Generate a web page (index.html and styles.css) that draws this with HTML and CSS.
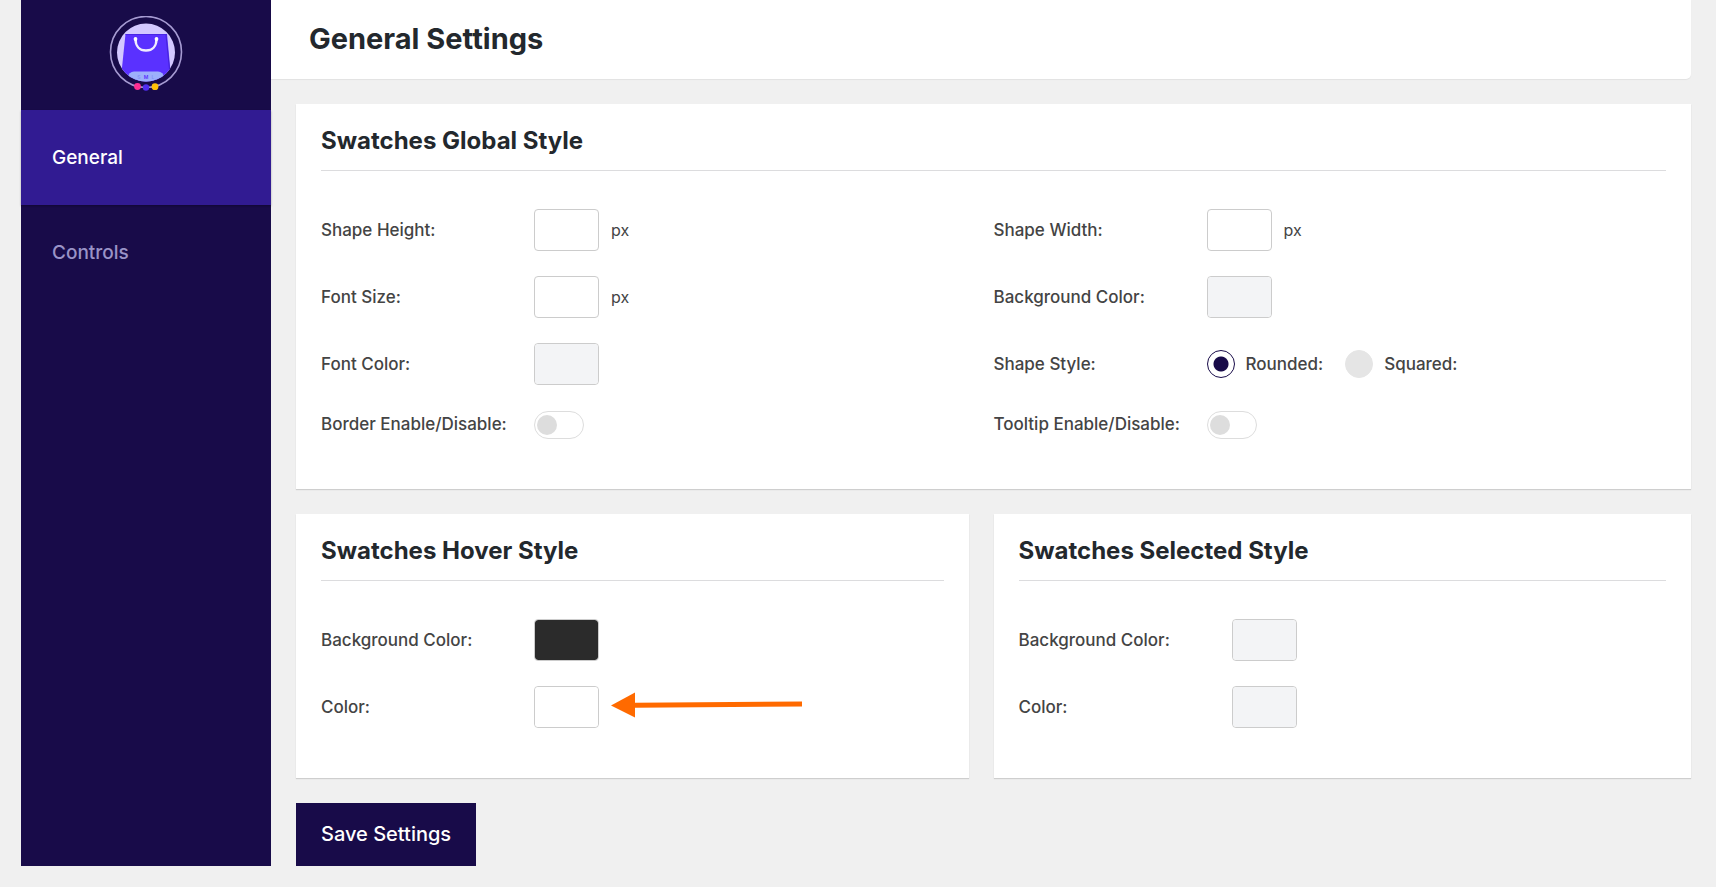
FILE: index.html
```html
<!doctype html>
<html lang="en">
  <head>
    <meta charset="UTF-8" />
    <meta name="viewport" content="width=device-width, initial-scale=1" />
    <title>General Settings</title>
    <link rel="stylesheet" href="styles.css">
  </head>
  <body>
    <div class="settings">
      <!-- sidebar -->
      <aside class="sidebar">
        <div class="sidebar-logo">
          <svg width="74" height="76" viewBox="0 0 74 76" role="img" aria-label="Swatches">
            <defs>
              <clipPath id="logo-clip">
                <circle cx="37" cy="36.5" r="29" />
              </clipPath>
            </defs>
            <circle cx="37" cy="36" r="35.5" fill="none" stroke="#a69bd2" stroke-width="1.6" />
            <circle cx="37" cy="36.5" r="29" fill="#d3c8ff" />
            <g clip-path="url(#logo-clip)">
              <path d="M16.5 18h41.5l4.5 48h-51z" fill="#5a31ff" />
              <path d="M16.5 18.5h41.5" stroke="#4a26e6" stroke-width="1" />
              <path d="M57 19l4.5 44" stroke="#4523d8" stroke-width="1" />
              <rect x="19" y="55.5" width="36" height="16" rx="6" fill="#9db0fb" />
              <text class="logo-sizes" x="30" y="63">S</text>
              <text class="logo-sizes logo-sizes-active" x="37" y="63">M</text>
              <text class="logo-sizes" x="44" y="63">L</text>
            </g>
            <path
              d="M26.5 23c0 7 4 11.5 10.5 11.5s10.5-4.5 10.5-11.5"
              fill="none"
              stroke="#f0ecff"
              stroke-width="2.4"
              stroke-linecap="round"
            />
            <circle cx="26.5" cy="23" r="1.9" fill="#fff" />
            <circle cx="47.5" cy="23" r="1.9" fill="#fff" />
            <circle cx="28.5" cy="70.5" r="3.4" fill="#ff2e93" />
            <circle cx="37" cy="71.5" r="3.2" fill="#4f2cf0" />
            <circle cx="46" cy="70.7" r="3.4" fill="#ffc107" />
          </svg>
        </div>
        <nav class="sidebar-nav">
          <a href="#general" class="nav-link active">General</a>
          <a href="#controls" class="nav-link">Controls</a>
        </nav>
      </aside>

      <!-- main -->
      <main class="main">
        <header class="header">
          <h1>General Settings</h1>
        </header>

        <form class="content">
          <!-- global style -->
          <section class="card">
            <h2>Swatches Global Style</h2>
            <div class="fields fields-two">
              <div class="field">
                <label for="shape-height">Shape Height:</label>
                <input type="text" inputmode="numeric" class="box" id="shape-height" />
                <span class="unit">px</span>
              </div>
              <div class="field">
                <label for="shape-width">Shape Width:</label>
                <input type="text" inputmode="numeric" class="box" id="shape-width" />
                <span class="unit">px</span>
              </div>
              <div class="field">
                <label for="font-size">Font Size:</label>
                <input type="text" inputmode="numeric" class="box" id="font-size" />
                <span class="unit">px</span>
              </div>
              <div class="field">
                <label for="bg-color">Background Color:</label>
                <input type="color" class="box" id="bg-color" value="#f3f4f6" />
              </div>
              <div class="field">
                <label for="font-color">Font Color:</label>
                <input type="color" class="box" id="font-color" value="#f3f4f6" />
              </div>
              <div class="field" role="radiogroup" aria-labelledby="shape-style">
                <span class="label" id="shape-style">Shape Style:</span>
                <div class="radios">
                  <label class="radio"><input type="radio" name="shape" checked />Rounded:</label>
                  <label class="radio"><input type="radio" name="shape" />Squared:</label>
                </div>
              </div>
              <div class="field">
                <label for="border-enable">Border Enable/Disable:</label>
                <input type="checkbox" class="switch" id="border-enable" />
              </div>
              <div class="field">
                <label for="tooltip-enable">Tooltip Enable/Disable:</label>
                <input type="checkbox" class="switch" id="tooltip-enable" />
              </div>
            </div>
          </section>

          <div class="card-row">
            <!-- hover style -->
            <section class="card">
              <h2>Swatches Hover Style</h2>
              <div class="fields">
                <div class="field">
                  <label for="hover-bg">Background Color:</label>
                  <input type="color" class="box" id="hover-bg" value="#2b2b2b" />
                </div>
                <div class="field">
                  <label for="hover-color">Color:</label>
                  <input type="color" class="box" id="hover-color" value="#ffffff" />
                  <svg class="arrow" width="192" height="30" viewBox="0 0 192 30" aria-hidden="true">
                    <path d="M24 13.2L191 12" stroke="#ff6a00" stroke-width="5" />
                    <path d="M0 13.5L24 0.5v25z" fill="#ff6a00" />
                  </svg>
                </div>
              </div>
            </section>
            <!-- selected style -->
            <section class="card">
              <h2>Swatches Selected Style</h2>
              <div class="fields">
                <div class="field">
                  <label for="selected-bg">Background Color:</label>
                  <input type="color" class="box" id="selected-bg" value="#f3f4f6" />
                </div>
                <div class="field">
                  <label for="selected-color">Color:</label>
                  <input type="color" class="box" id="selected-color" value="#f3f4f6" />
                </div>
              </div>
            </section>
          </div>

          <button type="submit" class="save">Save Settings</button>
        </form>
      </main>
    </div>
  </body>
</html>
```
FILE: styles.css
```css
* {
  box-sizing: border-box;
}

body {
  margin: 0;
  background-color: #f0f0f0;
  color: #444;
  font-family: Inter, 'Liberation Sans', sans-serif;
  font-size: 17px;
}

h1,
h2 {
  margin: 0;
}

.settings {
  display: flex;
  padding: 0 25px 21px 21px;
}

/* sidebar */
.sidebar {
  flex: 0 0 250px;
  background-color: #180b49;
}
.sidebar-logo {
  display: flex;
  justify-content: center;
  height: 110px;
  padding-top: 16px;
}
.logo-sizes {
  font-size: 5px;
  font-weight: 600;
  text-anchor: middle;
  fill: #8390f5;
}
.logo-sizes-active {
  fill: #5a31ff;
}
.nav-link {
  display: flex;
  align-items: center;
  height: 95px;
  padding: 0 31px;
  color: #9a93c7;
  font-size: 19px;
  font-weight: 500;
  text-decoration: none;
}
.nav-link.active {
  background-color: #311b92;
  color: #fff;
  box-shadow: 0 1px 2px rgba(0, 0, 0, 0.3);
}

/* main */
.main {
  flex: 1;
  min-width: 0;
}
.header {
  padding: 20px 38px 21px;
  background-color: #fff;
  border-bottom-right-radius: 5px;
  box-shadow: 0 1px 1px rgba(0, 0, 0, 0.06);
}
.header h1 {
  color: #23282d;
  font-size: 29px;
  line-height: 38px;
  font-weight: 700;
}
.content {
  display: flex;
  flex-direction: column;
  align-items: flex-start;
  gap: 25px;
  padding: 25px 0 0 25px;
}

/* cards */
.card {
  width: 100%;
  padding: 21px 25px 50px;
  background-color: #fff;
  box-shadow: 0 1px 1px rgba(0, 0, 0, 0.14);
}
.card h2 {
  padding-bottom: 13px;
  border-bottom: 1px solid #dcdcde;
  color: #23282d;
  font-size: 24px;
  line-height: 32px;
  font-weight: 700;
}
.card-row {
  display: grid;
  grid-template-columns: 1fr 1fr;
  width: 100%;
}
.card-row .card:first-child {
  width: auto;
  margin-right: 25px;
}

/* fields */
.fields {
  display: grid;
  row-gap: 25px;
  padding-top: 38px;
}
.fields-two {
  grid-template-columns: 1fr 1fr;
}
.field {
  display: flex;
  align-items: center;
  line-height: 29px;
}
.field > label,
.field > .label {
  flex: 0 0 213px;
  font-weight: 500;
}
.box {
  width: 65px;
  height: 42px;
  padding: 0 8px;
  border: 1px solid #ccc;
  border-radius: 4px;
  background-color: #fff;
  font: inherit;
  appearance: none;
}
.box[type='color'] {
  padding: 0;
  overflow: hidden;
  cursor: pointer;
}
.box::-webkit-color-swatch-wrapper {
  padding: 0;
}
.box::-webkit-color-swatch {
  border: 0;
  border-radius: 3px;
}
.unit,
.arrow {
  margin-left: 12px;
}
.unit {
  font-size: 16px;
}

/* radios */
.radios {
  display: flex;
  gap: 22px;
}
.radio {
  display: flex;
  align-items: center;
  gap: 11px;
  font-weight: 500;
}
.radio input {
  width: 28px;
  height: 28px;
  margin: 0;
  border: 1px solid #e5e5e5;
  border-radius: 50%;
  background-color: #e5e5e5;
  appearance: none;
}
.radio input:checked {
  border-color: #180b49;
  background: radial-gradient(circle, #180b49 7px, #fff 8px);
}

/* switch */
.switch {
  width: 50px;
  height: 28px;
  margin: 0;
  padding: 3px 2px;
  border: 1px solid #ddd;
  border-radius: 14px;
  background-color: #fff;
  appearance: none;
}
.switch::before {
  content: '';
  display: block;
  width: 20px;
  height: 20px;
  border-radius: 50%;
  background-color: #ddd;
}
.switch:checked::before {
  margin-left: auto;
  background-color: #180b49;
}

.save {
  padding: 16px 25px;
  border: 0;
  background-color: #180b49;
  color: #fff;
  font-family: inherit;
  font-size: 20px;
  line-height: 31px;
  font-weight: 500;
  cursor: pointer;
}
```
